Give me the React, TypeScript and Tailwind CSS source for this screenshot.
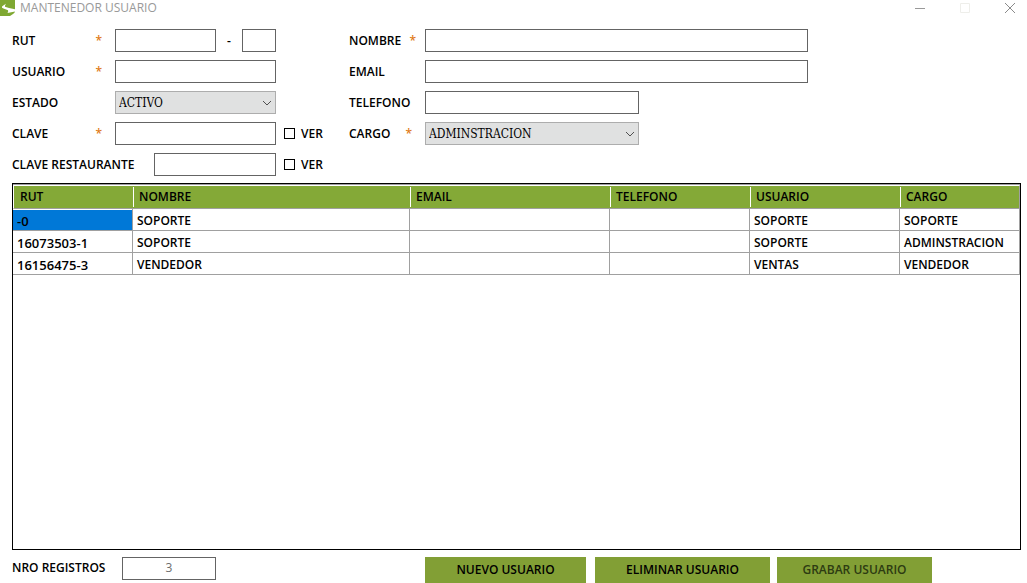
import React from 'react';
import clsx from 'clsx';

const FIELD = 'h-[23px] border border-[#646464] bg-white px-1 outline-none';

const COLUMNS = [
    { key: 'rut', label: 'RUT', width: 'w-[120px]' },
    { key: 'nombre', label: 'NOMBRE', width: '' },
    { key: 'email', label: 'EMAIL', width: 'w-[200px]' },
    { key: 'telefono', label: 'TELEFONO', width: 'w-[140px]' },
    { key: 'usuario', label: 'USUARIO', width: 'w-[150px]' },
    { key: 'cargo', label: 'CARGO', width: 'w-[120px]' },
] as const;

const USERS = [
    { rut: '-0', nombre: 'SOPORTE', email: '', telefono: '', usuario: 'SOPORTE', cargo: 'SOPORTE' },
    { rut: '16073503-1', nombre: 'SOPORTE', email: '', telefono: '', usuario: 'SOPORTE', cargo: 'ADMINSTRACION' },
    { rut: '16156475-3', nombre: 'VENDEDOR', email: '', telefono: '', usuario: 'VENTAS', cargo: 'VENDEDOR' },
];

const FieldLabel = ({ htmlFor, text, required, className }: { htmlFor: string; text: string; required?: boolean; className: string }) => (
    <label htmlFor={htmlFor} className={clsx('flex shrink-0 items-center justify-between whitespace-nowrap', className)}>
        {text}
        {required && <span className="text-[#e07b1a]">*</span>}
    </label>
);

const Dropdown = ({ id, options, className }: { id: string; options: string[]; className: string }) => (
    <div className={clsx('relative', className)}>
        <select
            id={id}
            className="block h-[23px] w-full appearance-none border border-[#adadad] bg-[#e0e1e1] pl-[3px] pr-5 font-['DejaVu_Serif_Condensed','Liberation_Serif',serif] text-[12px] font-normal outline-none"
        >
            {options.map((option) => (
                <option key={option}>{option}</option>
            ))}
        </select>
        <svg className="pointer-events-none absolute right-1 top-2 h-2 w-2.5" viewBox="0 0 10 8" fill="none" stroke="#505050">
            <path d="M1 2l4 4 4-4" />
        </svg>
    </div>
);

const ShowPassword = ({ id }: { id: string }) => (
    <div className="flex items-center gap-1.5 pl-2">
        <input id={id} type="checkbox" className="h-[11px] w-[11px] appearance-none border border-black bg-white checked:bg-black" />
        <label htmlFor={id}>VER</label>
    </div>
);

const TitleBar = () => (
    <header className="flex h-4 items-start justify-between pr-3">
        <div className="flex items-start gap-[5px]">
            <svg width="15" height="16" viewBox="0 0 15 16">
                <path d="M0 0h15v11q0 2-2 3l-3 2H0z" fill="#7fa832" />
                <path d="M6 3.800L4 5 2 6.500Q1.300 8 3.500 8.600L8 10.200Q8.600 11.200 7.500 13L15 11.500V9.200L9 8 5 6.800Q4.600 5.600 6 3.800z" fill="#fff" />
            </svg>
            <h1 className="font-normal leading-4 text-[#999]">MANTENEDOR USUARIO</h1>
        </div>
        <div className="flex gap-[35px] pt-[3px]">
            <button type="button" aria-label="Minimizar">
                <svg width="10" height="10" viewBox="0 0 10 10" className="block">
                    <path d="M0 5.5h10" stroke="#999" />
                </svg>
            </button>
            <button type="button" aria-label="Maximizar" disabled>
                <svg width="10" height="10" viewBox="0 0 10 10" className="block">
                    <path d="M.5.5h9v9h-9z" fill="none" stroke="#eeeeea" />
                </svg>
            </button>
            <button type="button" aria-label="Cerrar">
                <svg width="10" height="10" viewBox="0 0 10 10" className="block">
                    <path d="M0 0l10 10M10 0L0 10" stroke="#8a8a8a" />
                </svg>
            </button>
        </div>
    </header>
);

const UserForm = () => (
    <form className="flex pl-3 pt-[13px]">
        <div className="flex w-[337px] shrink-0 flex-col gap-2">
            <div className="flex items-center">
                <FieldLabel htmlFor="rut" text="RUT" required className="w-[103px] pr-[13px]" />
                <input id="rut" className={clsx(FIELD, 'w-[101px]')} />
                <span className="w-[26px] text-center">-</span>
                <input aria-label="Digito verificador" className={clsx(FIELD, 'w-[34px]')} />
            </div>
            <div className="flex items-center">
                <FieldLabel htmlFor="usuario" text="USUARIO" required className="w-[103px] pr-[13px]" />
                <input id="usuario" className={clsx(FIELD, 'w-[161px]')} />
            </div>
            <div className="flex items-center">
                <FieldLabel htmlFor="estado" text="ESTADO" className="w-[103px]" />
                <Dropdown id="estado" options={['ACTIVO', 'INACTIVO']} className="w-[161px]" />
            </div>
            <div className="flex items-center">
                <FieldLabel htmlFor="clave" text="CLAVE" required className="w-[103px] pr-[13px]" />
                <input id="clave" type="password" className={clsx(FIELD, 'w-[161px]')} />
                <ShowPassword id="ver-clave" />
            </div>
            <div className="flex items-center">
                <FieldLabel htmlFor="clave-restaurante" text="CLAVE RESTAURANTE" className="w-[142px]" />
                <input id="clave-restaurante" type="password" className={clsx(FIELD, 'w-[122px]')} />
                <ShowPassword id="ver-clave-restaurante" />
            </div>
        </div>

        <div className="flex w-[459px] flex-col gap-2">
            <div className="flex items-center">
                <FieldLabel htmlFor="nombre" text="NOMBRE" required className="w-[76px] pr-[9px]" />
                <input id="nombre" className={clsx(FIELD, 'min-w-0 flex-1')} />
            </div>
            <div className="flex items-center">
                <FieldLabel htmlFor="email" text="EMAIL" className="w-[76px]" />
                <input id="email" type="email" className={clsx(FIELD, 'min-w-0 flex-1')} />
            </div>
            <div className="flex items-center">
                <FieldLabel htmlFor="telefono" text="TELEFONO" className="w-[76px]" />
                <input id="telefono" type="tel" className={clsx(FIELD, 'w-[214px]')} />
            </div>
            <div className="flex items-center">
                <FieldLabel htmlFor="cargo" text="CARGO" required className="w-[76px] pr-[13px]" />
                <Dropdown id="cargo" options={['ADMINSTRACION', 'SOPORTE', 'VENDEDOR']} className="w-[214px]" />
            </div>
        </div>
    </form>
);

const UserTable = () => (
    <div className="ml-3 mr-1.5 mt-[7px] flex-1 border border-black">
        <table className="w-full table-fixed border-separate border-spacing-0 border-t border-[#a0a0a0] text-left">
            <thead>
                <tr>
                    {COLUMNS.map((col, i) => (
                        <th
                            key={col.key}
                            className={clsx(
                                'border-b border-t border-b-[#a0a0a0] border-t-white bg-[#84a937] p-0 font-semibold',
                                i === 0 && 'border-l border-l-white',
                                i === COLUMNS.length - 1 && 'border-r border-r-[#a0a0a0]',
                                col.width,
                            )}
                        >
                            <div className={clsx('my-px h-5 leading-5', i > 0 ? 'border-l border-white pl-[5px]' : 'pl-1.5')}>{col.label}</div>
                        </th>
                    ))}
                </tr>
            </thead>
            <tbody>
                {USERS.map((user, row) => (
                    <tr key={user.rut}>
                        {COLUMNS.map((col, i) => (
                            <td key={col.key} className="border-b border-r border-[#a0a0a0] p-0">
                                <div
                                    className={clsx(
                                        'h-[21px] border-t border-white pl-1 pt-px leading-5',
                                        i === 0 && 'text-[13px]',
                                        row === 0 && i === 0 && 'bg-[#0078d7]',
                                    )}
                                >
                                    {user[col.key]}
                                </div>
                            </td>
                        ))}
                    </tr>
                ))}
            </tbody>
        </table>
    </div>
);

const App: React.FC = () => (
    <div className="flex min-h-screen flex-col bg-white font-['Open_Sans',sans-serif] text-[12px] font-semibold leading-5 text-black">
        <TitleBar />
        <UserForm />
        <UserTable />
        <footer className="flex pl-3 pt-[7px]">
            <div className="flex w-[413px] shrink-0 items-start">
                <label htmlFor="registros" className="w-[110px] pt-px">NRO REGISTROS</label>
                <input
                    id="registros"
                    readOnly
                    value="3"
                    className={clsx(FIELD, 'w-[94px] pb-0.5 text-center font-normal text-[#6d6d6d]')}
                />
            </div>
            <button type="button" className="mr-[9px] h-[26px] w-[161px] bg-[#829f35]">NUEVO USUARIO</button>
            <button type="button" className="mr-[7px] h-[26px] w-[175px] bg-[#829f35]">ELIMINAR USUARIO</button>
            <button type="button" disabled className="h-[26px] w-[155px] bg-[#829f35] text-[#2d3b12]">GRABAR USUARIO</button>
        </footer>
    </div>
);

export default App;
